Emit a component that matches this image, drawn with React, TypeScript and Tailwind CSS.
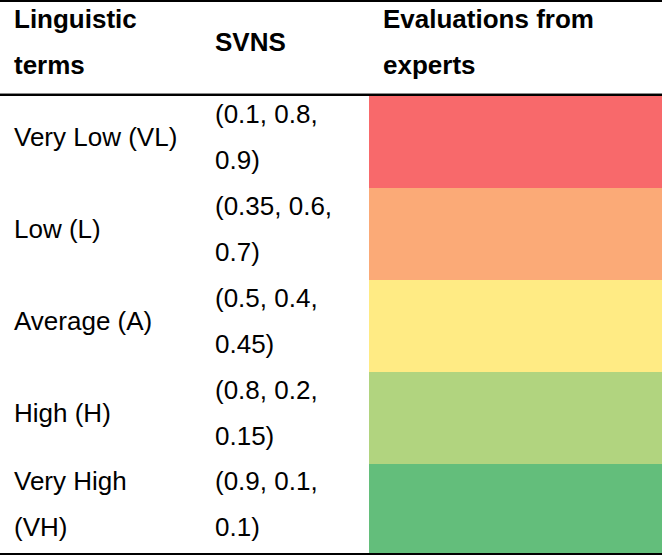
const rows = [
  { term: ['Very Low (VL)'], svns: ['(0.1, 0.8,', '0.9)'], color: 'bg-[#f8696b]', h: 'h-[92px]' },
  { term: ['Low (L)'], svns: ['(0.35, 0.6,', '0.7)'], color: 'bg-[#fbaa77]', h: 'h-[92px]' },
  { term: ['Average (A)'], svns: ['(0.5, 0.4,', '0.45)'], color: 'bg-[#ffeb84]', h: 'h-[92px]' },
  { term: ['High (H)'], svns: ['(0.8, 0.2,', '0.15)'], color: 'bg-[#b1d47f]', h: 'h-[92px]' },
  { term: ['Very High', '(VH)'], svns: ['(0.9, 0.1,', '0.1)'], color: 'bg-[#63be7b]', h: 'h-[89px]' },
];

// negative top margin nudges the centred text up a few px, like the source table
function Lines({ lines, nudge }: { lines: string[]; nudge: string }) {
  return (
    <div className={`flex flex-col ${nudge}`}>
      {lines.map((l) => (
        <span key={l} className="whitespace-nowrap">
          {l}
        </span>
      ))}
    </div>
  );
}

export default function App() {
  return (
    <div
      className="w-[662px] h-[555px] bg-white text-black text-[26px] leading-[46px] overflow-hidden"
      style={{ fontFamily: '"Liberation Sans", Arial, sans-serif' }}
    >
      <div className="border-t-2 border-b-[2px] border-black">
        {/* Header */}
        <div className="grid grid-cols-[201px_168px_1fr] h-[92px] font-bold border-b border-[#8a8a8a]">
          <div className="flex items-center pl-[14px]">
            <Lines lines={['Linguistic', 'terms']} nudge="-mt-[12px]" />
          </div>
          <div className="flex items-center pl-[14px]">
            <Lines lines={['SVNS']} nudge="-mt-[12px]" />
          </div>
          <div className="flex items-center pl-[14px]">
            <Lines lines={['Evaluations from', 'experts']} nudge="-mt-[12px]" />
          </div>
        </div>
        <div className="border-t-2 border-black">
          {rows.map((r, i) => (
            <div key={i} className={`grid grid-cols-[201px_168px_1fr] ${r.h}`}>
              <div className="flex items-center pl-[14px]">
                <Lines lines={r.term} nudge="-mt-[10px]" />
              </div>
              <div className="flex items-center pl-[14px]">
                <Lines lines={r.svns} nudge="-mt-[10px]" />
              </div>
              <div className={r.color} />
            </div>
          ))}
        </div>
      </div>
    </div>
  );
}
